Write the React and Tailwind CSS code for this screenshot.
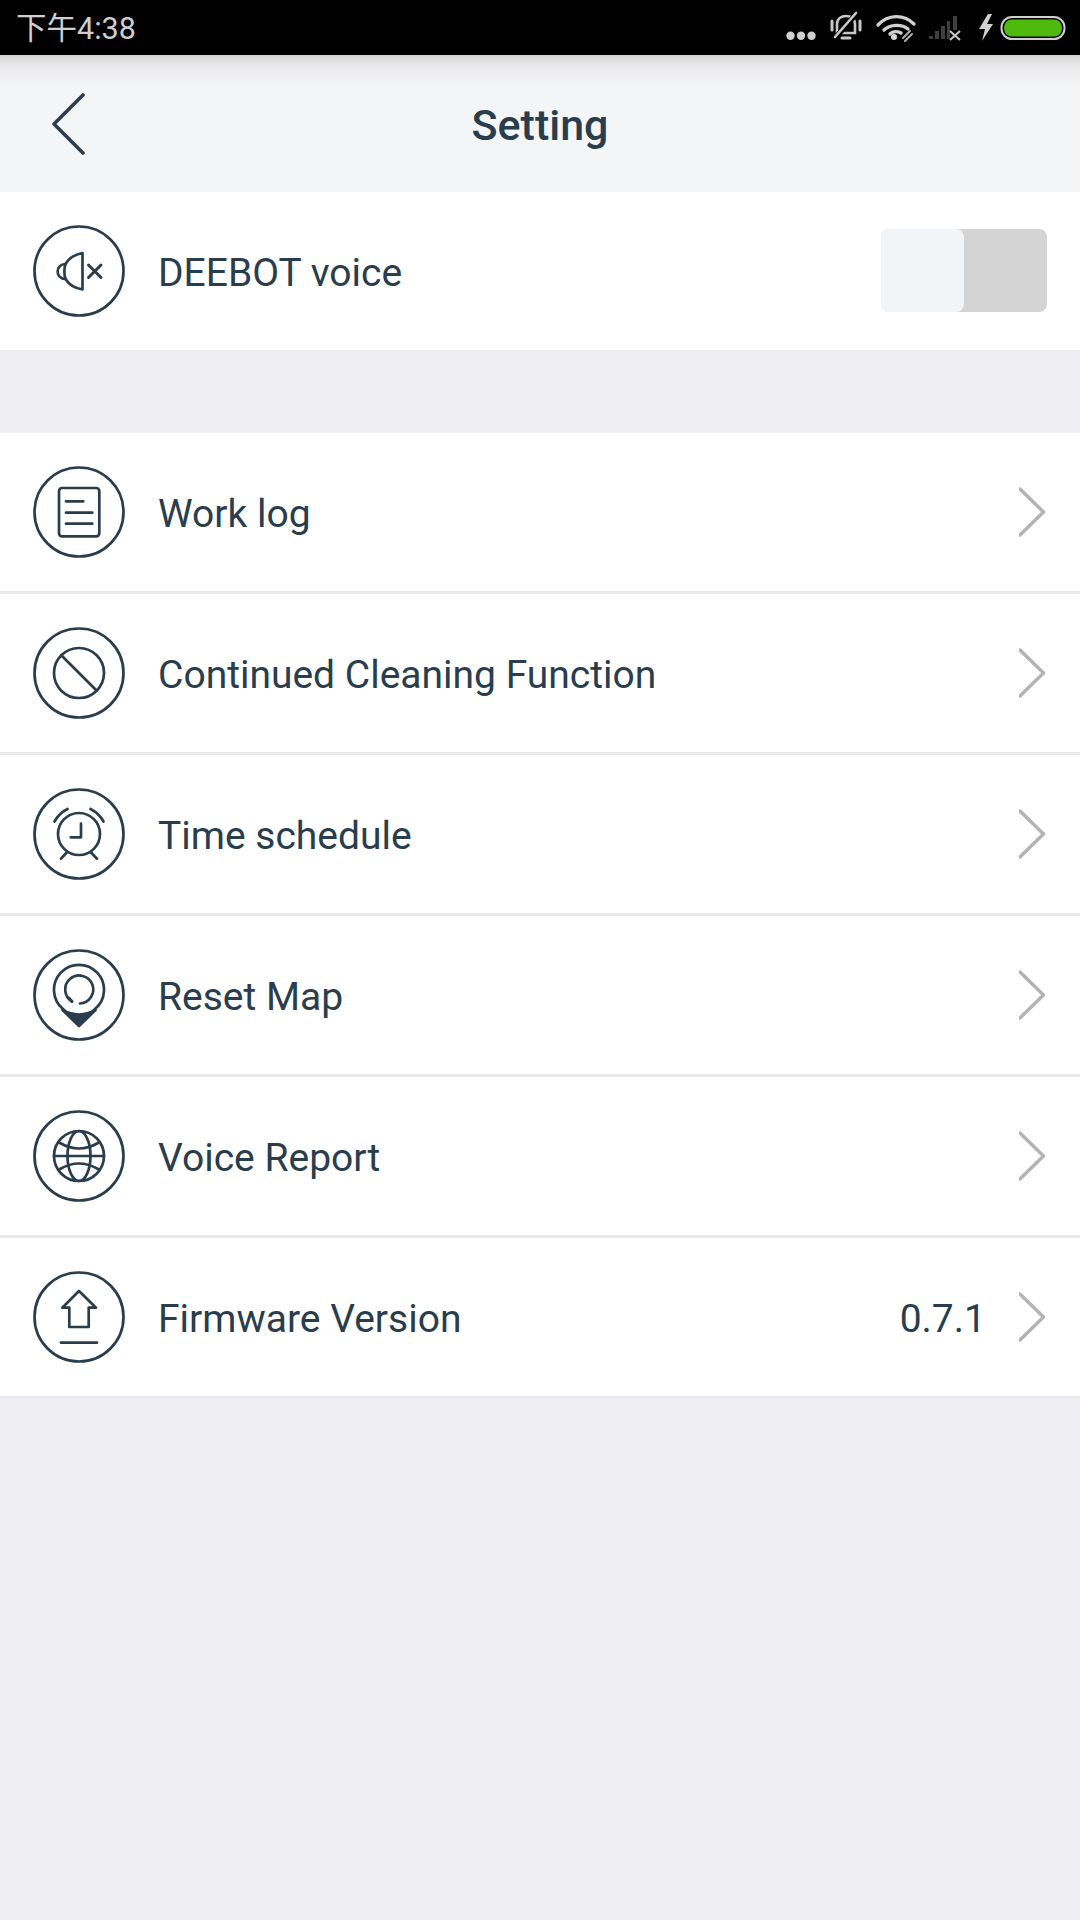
import React from "react";

const font = { roboto: "font-['Roboto','Noto_Sans_CJK_SC',sans-serif]" };

const StatusIcons = () => (
  <svg width="290" height="55" viewBox="780 0 290 55" fill="none">
    {/* more dots */}
    <circle cx="790.5" cy="35.7" r="4.2" fill="#d0d0d0" />
    <circle cx="801" cy="35.7" r="4.2" fill="#d0d0d0" />
    <circle cx="811.5" cy="35.7" r="4.2" fill="#d0d0d0" />
    {/* silent bell */}
    <g stroke="#c8c8c8" strokeWidth="2.6" strokeLinecap="round">
      <path d="M837 33 V24 C837 19 841 16 846 16 C851 16 855 19 855 24 V33 Z" fill="#000" />
      <path d="M842 38 H850" strokeWidth="3" />
      <path d="M832 21 V30 M860 21 V30" strokeWidth="3" />
      <path d="M836 37 L857 13" stroke="#000" strokeWidth="5.5" />
      <path d="M835 37 L856 13" />
    </g>
    {/* wifi */}
    <g stroke="#d0d0d0" strokeWidth="3.4" strokeLinecap="round">
      <path d="M878 25 C888 14 904 14 914 24" />
      <path d="M884 30 C890 24 902 24 908 29" />
      <path d="M890 34 C893 31 898 31 901 33" />
    </g>
    <circle cx="894" cy="37" r="3" fill="#d8d8d8" />
    <path d="M903 38 L910 31 M905 41 L912 34" stroke="#b0b0b0" strokeWidth="2" strokeLinecap="round" />
    {/* signal */}
    <path d="M929 39 h4 v-3 h-4z M935 39 h4 v-8 h-4z M941 39 h4 v-13 h-4z M947 39 h3 v-18 h-3z M953 30 h4 v-14 h-4z" fill="#3f3f3f" />
    <path d="M950 31 L960 40 M960 31 L950 40" stroke="#c8c8c8" strokeWidth="2" />
    {/* bolt */}
    <path d="M988 14 L979 29 H985 L982 41 L993 24 H987 L992 14 Z" fill="#d0d0d0" />
    {/* battery */}
    <rect x="1001.5" y="17" width="63" height="22" rx="10.5" stroke="#d0d0d0" strokeWidth="2" />
    <rect x="1004" y="19.5" width="58" height="17" rx="8" fill="#4fb90e" />
  </svg>
);

const BackIcon = () => (
  <svg width="34" height="64" viewBox="0 0 34 64" fill="none" stroke="#2c3e4e" strokeWidth="3.6" strokeLinecap="round" strokeLinejoin="round">
    <path d="M31 3 L2 32 L31 61" />
  </svg>
);

const Chevron = () => (
  <svg width="28" height="50" viewBox="0 0 28 50" fill="none" stroke="#b2b4b4" strokeWidth="3.4" strokeLinecap="round" strokeLinejoin="round">
    <path d="M1 2 L24.5 25 L1 48" />
  </svg>
);

const CircleIcon = ({ children }) => (
  <svg width="92" height="92" viewBox="0 0 92 92" fill="none" stroke="#2a3d4d" strokeWidth="2.7" strokeLinecap="round" strokeLinejoin="round">
    <circle cx="46" cy="46" r="44.5" />
    {children}
  </svg>
);

const MuteGlyph = () => (
  <>
    <path d="M49.5 28 C41 29.5 35.5 34 32.5 39 C22 39 22 54 32.5 54 C35.5 59 41 63 49.5 64.5 Z" />
    <path d="M32.5 39 C31 43 31 50 32.5 54" />
    <path d="M55.5 40 L68 52.5 M68 40 L55.5 52.5" strokeWidth="3" />
  </>
);

const LogGlyph = () => (
  <>
    <rect x="26" y="22" width="40.3" height="48.3" rx="3" />
    <path d="M33 35.3 H50.3 M33 46.7 H59.3 M33 57.7 H59.3" />
  </>
);

const BanGlyph = () => (
  <>
    <circle cx="46" cy="46" r="25" />
    <path d="M28.5 28.5 L63.5 63.5" />
  </>
);

const ClockGlyph = () => (
  <>
    <circle cx="46" cy="46" r="21" />
    <path d="M48 35.7 V49.3 H37.7" />
    <path d="M21.5 33.5 C24.5 28 28.5 24 34.5 21 M57.5 21 C63.5 24 67.5 28 70.5 33.5" />
    <path d="M28 70.7 L33.7 64.5 M58 64.5 L64 70.7" />
  </>
);

const PinGlyph = () => (
  <>
    <path d="M46 76 L30 60 A25 25 0 1 1 62 60 Z" />
    <path d="M29.5 61 Q46 70 62.5 61 L46 77 Z" fill="#2a3d4d" />
    <path d="M39 52.5 A14 14 0 1 1 47 54.5" />
    <path d="M39 52.5 L36 49" />
  </>
);

const GlobeGlyph = () => (
  <>
    <circle cx="46" cy="46" r="25" />
    <ellipse cx="46" cy="46" rx="11.5" ry="25" />
    <path d="M21 46 H71" />
    <path d="M27 33 Q46 44 65 33 M27 59 Q46 48 65 59" />
  </>
);

const UploadGlyph = () => (
  <>
    <path d="M46 20 L29.3 36.7 H36.3 V56 H55.7 V36.7 H63 Z" />
    <path d="M28 71.7 H64" />
  </>
);

const rows = [
  { label: "Work log", icon: <LogGlyph /> },
  { label: "Continued Cleaning Function", icon: <BanGlyph /> },
  { label: "Time schedule", icon: <ClockGlyph /> },
  { label: "Reset Map", icon: <PinGlyph /> },
  { label: "Voice Report", icon: <GlobeGlyph /> },
  { label: "Firmware Version", icon: <UploadGlyph />, value: "0.7.1" },
];

const SettingRow = ({ label, icon, value, last }) => (
  <div className={`flex items-center h-[161px] pl-[33px] pr-[33px] bg-white border-b-[3px] ${last ? "border-[#ebebed]" : "border-[#e8e9e9]"}`}>
    <CircleIcon>{icon}</CircleIcon>
    <span className="ml-[33px] pt-[4px] flex-1 text-[39px] text-[#2a3d4d]">{label}</span>
    {value && <span className="mr-[33px] pt-[4px] text-[39px] text-[#2a3d4d]">{value}</span>}
    <Chevron />
  </div>
);

export default function App() {
  return (
    <div className={`${font.roboto} w-full h-[1920px] bg-[#eeeef3]`}>
      <div className="flex items-center justify-between h-[55px] bg-black pl-[16px] pr-[10px]">
        <span className="pt-[2px] text-[30.5px] text-[#cfcfcf]">下午4:38</span>
        <StatusIcons />
      </div>

      <div className="relative flex items-center justify-center h-[137px] bg-[linear-gradient(#d2d2d2,#e9e9ea_10px,#f4f5f7_30px)]">
        <div className="absolute left-[52px] top-[37px]">
          <BackIcon />
        </div>
        <span className="pt-[3px] text-[43px] font-medium text-[#2a3d4d]">Setting</span>
      </div>

      <div className="flex items-center justify-between h-[158px] pl-[33px] pr-[33px] bg-white">
        <div className="flex items-center">
          <CircleIcon>
            <MuteGlyph />
          </CircleIcon>
          <span className="ml-[33px] pt-[5px] text-[39px] text-[#2a3d4d]">DEEBOT voice</span>
        </div>
        <div className="flex w-[166px] h-[83px] mb-[2px] rounded-lg bg-[#d4d4d4]">
          <div className="w-[83px] h-full rounded-lg bg-[#f2f5f8]" />
        </div>
      </div>

      <div className="mt-[83px]">
        {rows.map((row, i) => (
          <SettingRow key={row.label} {...row} last={i === rows.length - 1} />
        ))}
      </div>
    </div>
  );
}
